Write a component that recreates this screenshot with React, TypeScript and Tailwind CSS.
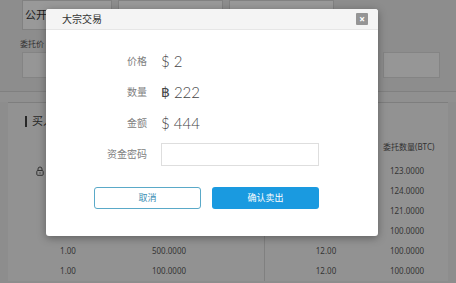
import React from "react";

const cjk = "font-['Noto_Sans','Noto_Sans_CJK_SC',sans-serif]";
const num = "font-['Lato','DejaVu_Sans',sans-serif] font-light";

const rightRows = ["123.0000", "124.0000", "121.0000", "100.0000", "100.0000", "100.0000"];
const leftRows = [
  { price: "", qty: "" },
  { price: "", qty: "" },
  { price: "", qty: "" },
  { price: "", qty: "" },
  { price: "1.00", qty: "500.0000" },
  { price: "1.00", qty: "100.0000" },
];

function LockIcon() {
  return (
    <svg width="8" height="10" viewBox="0 0 8 10" fill="none" stroke="#555" strokeWidth="1">
      <path d="M2 4.5V3a2 2 0 0 1 4 0v1.5" />
      <rect x="0.8" y="4.5" width="6.4" height="4.8" rx="1" />
      <path d="M4 6.3v1.3" />
    </svg>
  );
}

export default function App() {
  return (
    <div className={`relative w-[456px] h-[283px] overflow-hidden bg-[#ececec] ${cjk}`}>
      {/* page under the dialog */}
      <div className="flex flex-col">
        <div className="flex gap-[6px] pl-[22px] h-[30px]">
          <div className="w-[90px] h-full bg-white border border-[#d8d8d8] flex items-center pl-[2px] text-[11px] text-[#333]">
            公开
          </div>
          <div className="w-[105px] h-full bg-white border border-[#d8d8d8]"></div>
          <div className="w-[105px] h-full bg-white border border-[#d8d8d8]"></div>
        </div>
        <div className="pl-[20px] mt-[9px] h-[10px] text-[8px] leading-[10px] text-[#555]">委托价</div>
        <div className="flex justify-between pl-[22px] pr-[16px] mt-[3px] h-[26px]">
          <div className="w-[330px] h-full bg-[#fbfbfb] border border-[#dcdcdc]"></div>
          <div className="w-[57px] h-full bg-[#fbfbfb] border border-[#dcdcdc]"></div>
        </div>
        <div className="mt-[13px] h-[11px] border-t border-[#d6d6d6] bg-[#f1f1f1]"></div>
        <div className="mx-[8px] border-t border-[#d2d2d2] bg-[#f4f4f4]">
          <div className="h-[34px] flex items-center pl-[17px] pt-[3px] text-[11px] text-[#444]">
            <span className="w-[2px] h-[11px] bg-[#444] mr-[5px]"></span>
            买入
          </div>
          <div className="flex">
            <div className="w-[257px] border-r border-[#d6d6d6]">
              <div className="h-[24px]"></div>
              {leftRows.map((r, i) => (
                <div key={i} className="h-[20px] flex items-center text-[8px] text-[#5a5a5a]">
                  {i === 0 ? (
                    <div className="pl-[28px]">
                      <LockIcon />
                    </div>
                  ) : (
                    <>
                      <div className="w-[118px] text-center pl-[2px]">{r.price}</div>
                      <div className="w-[86px] text-center">{r.qty}</div>
                    </>
                  )}
                </div>
              ))}
            </div>
            <div className="flex-1">
              <div className="h-[20px] flex items-center text-[8px] text-[#555]">
                <div className="w-[118px]"></div>
                <div className="whitespace-nowrap">委托数量(BTC)</div>
              </div>
              <div className="h-[4px]"></div>
              {rightRows.map((v, i) => (
                <div key={i} className="h-[20px] flex items-center text-[8px] text-[#5a5a5a]">
                  <div className="w-[118px] text-center pl-[4px]">12.00</div>
                  <div className="w-[48px] text-center">{v}</div>
                </div>
              ))}
            </div>
          </div>
        </div>
      </div>

      {/* overlay */}
      <div className="absolute inset-0 bg-black/40"></div>

      {/* dialog */}
      <div className="absolute left-[46px] top-[9px] w-[332px] h-[227px] bg-white rounded-[3px] shadow-[0_2px_8px_rgba(0,0,0,0.35)] overflow-hidden">
        <div className="h-[21px] bg-[#f4f4f4] border-b border-[#e6e6e6] flex items-center justify-between pl-[16px] pr-[10px]">
          <span className="text-[10px] text-[#333]">大宗交易</span>
          <span className="w-[12px] h-[12px] bg-[#959595] rounded-[1px] flex items-center justify-center text-white text-[10px] leading-none font-bold">
            ×
          </span>
        </div>
        <div className="pl-[48px] pt-[16px]">
          <div className="grid grid-cols-[53px_1fr] gap-x-[14px]">
            <div className="h-[31px] flex items-center justify-end text-[10px] text-[#808080]">价格</div>
            <div className={`h-[31px] flex items-center text-[15px] text-[#444] ${num}`}>$ 2</div>
            <div className="h-[31px] flex items-center justify-end text-[10px] text-[#808080]">数量</div>
            <div className={`h-[31px] flex items-center text-[15px] text-[#444] ${num}`}>
              <span className="font-['DejaVu_Sans',sans-serif] font-normal text-[14px] mr-[4px] text-[#444]">฿</span>222
            </div>
            <div className="h-[31px] flex items-center justify-end text-[10px] text-[#808080]">金额</div>
            <div className={`h-[31px] flex items-center text-[15px] text-[#444] ${num}`}>$ 444</div>
            <div className="mt-[4px] h-[23px] flex items-center justify-end text-[10px] text-[#808080]">资金密码</div>
            <div className="mt-[4px] w-[158px] h-[23px] border border-[#dedede]"></div>
          </div>
          <div className="flex gap-[11px] mt-[21px]">
            <button className="w-[107px] h-[22px] border border-[#5aa9c8] rounded-[3px] text-[9px] text-[#3a8db3] bg-white">
              取消
            </button>
            <button className="w-[107px] h-[22px] rounded-[3px] bg-[#1a9ae0] text-[9px] text-white">
              确认卖出
            </button>
          </div>
        </div>
      </div>
    </div>
  );
}
